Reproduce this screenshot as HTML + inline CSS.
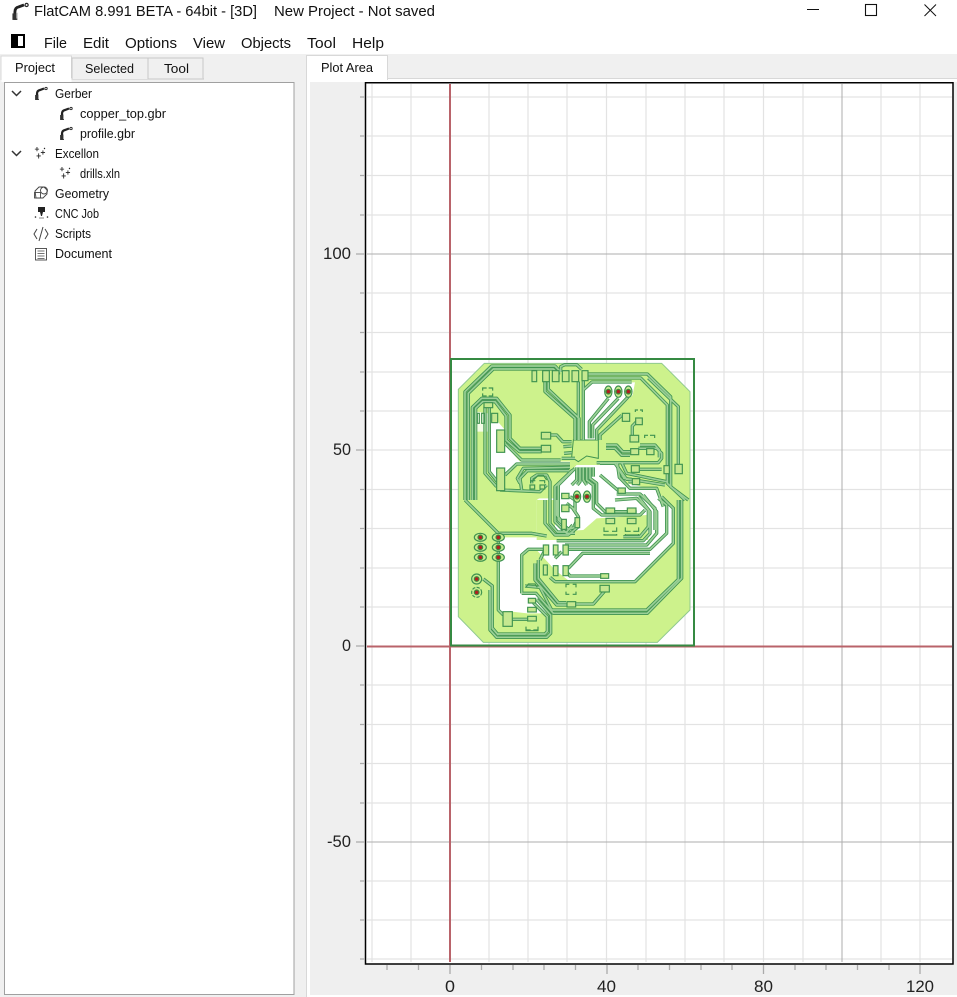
<!DOCTYPE html>
<html><head><meta charset="utf-8"><title>FlatCAM</title>
<style>
html,body{margin:0;padding:0;background:#fff;width:957px;height:997px;overflow:hidden}
svg{display:block}
text{font-family:"Liberation Sans",sans-serif;fill:#111}
.t{font-size:12.5px}
.m{font-size:15px}
.h{font-size:15px}
.a{font-size:16.500px;fill:#222}
</style></head><body>
<svg width="957" height="997" viewBox="0 0 957 997" xmlns="http://www.w3.org/2000/svg">
<defs>
<g id="gb" fill="none" stroke="#222">
<path d="M3 13V7Q3 3.500 6 3L10 1.500" stroke-width="2.200"/>
<path d="M3 13V8" stroke-width="3.800" stroke="#333"/>
<path d="M4.500 12V7.500" stroke-width="1" stroke="#aaa"/>
<circle cx="12" cy="1.500" r="1.200" stroke-width=".9"/>
</g>
<g id="ex" fill="#222">
<path d="M3 0h1v2h2v1h-2v2h-1v-2h-2v-1h2zM10 4h1v2h2v1h-2v2h-1v-2h-2v-1h2zM5 7.500h1v2.500h2v1h-2v2.500h-1v-2.500h-2v-1h2z" transform="scale(.85)"/>
<circle cx="10.500" cy="1.500" r=".7"/>
</g>
<g id="tr" fill="none" stroke-linejoin="round">
<path d="M75 450V125L155 48H345L362 66"/>
<path d="M85 450V130L160 57H340L358 75"/>
<path d="M97 450V172L125 145H170L210 195V265L240 295H305"/>
<path d="M107 450V175L128 155H165L198 198V270L238 305H305"/>
<path d="M135 170V370L170 410"/>
<path d="M148 170V365L172 395"/>
<path d="M195 280L245 330H362"/>
<path d="M195 375L230 342H390"/>
<path d="M445 72H622L692 140V410L745 450"/>
<path d="M445 84H602L682 165V400L735 450"/>
<path d="M715 345V170L625 84"/>
<path d="M315 95V125L405 205V270"/>
<path d="M325 95V118L417 205V270"/>
<path d="M415 95V270M430 90V270"/>
<path d="M432 118L456 96H575"/>
<path d="M505 145L448 215V265"/>
<path d="M535 145L458 225V265"/>
<path d="M565 140L470 240V270"/>
<path d="M545 196L480 255V270"/>
<path d="M590 215L577 228V262"/>
<path d="M330 255H350L368 275H395"/>
<path d="M370 290L395 288M372 310L395 308"/>
<path d="M365 325H405"/>
<path d="M362 66V50L375 44H410L425 58"/>
<path d="M498 285H530L548 305H570"/>
<path d="M498 295H525L545 316H570"/>
<path d="M595 295H650L665 310V325L655 338H470"/>
<path d="M600 285H645L658 300V322"/>
<path d="M545 338L560 370L680 395"/>
<path d="M530 345L552 385L675 405"/>
<path d="M600 358H665M600 395H565"/>
<path d="M240 400L232 385L250 355L390 352"/>
<path d="M245 420L240 385L262 362H388"/>
<path d="M275 400V385L290 375H320L330 395V450"/>
<path d="M180 420L300 425L320 405"/>
<g transform="translate(0,450)">
<path d="M75 0L175 100H275L320 108"/>
<path d="M175 112V330L190 345"/>
<path d="M130 237L157 258V385L175 405"/>
<path d="M150 270V390L170 412H320L332 400V345L290 298"/>
<path d="M158 385L172 402H315L322 394V350L280 308"/>
<path d="M215 358H262"/>
<path d="M245 280V165L265 148H310"/>
<path d="M245 280H288L340 340H622L725 235V0"/>
<path d="M255 258L300 262L335 330H620L715 238V0"/>
<path d="M285 190V240L350 315H380"/>
<path d="M295 180V235L355 308H378"/>
<path d="M375 148H630L680 100V15L655 -5"/>
<path d="M375 135H620L650 100V35L610 -15"/>
<path d="M350 122H610L630 100V35L595 -10"/>
<path d="M375 210L390 228H485"/>
<path d="M385 205L428 160H630"/>
<path d="M330 232L345 245H585L700 130V25L665 -10"/>
<path d="M395 312H460L495 272"/>
<path d="M315 0V70L345 105H385L415 80V60"/>
<path d="M330 0V70L352 96H380L398 75"/>
<path d="M350 0V45L370 70"/>
<path d="M322 135L300 180M345 175L365 155"/>
</g>
<g transform="translate(270,210)">
<path d="M135 145L85 195V300L115 328L135 322"/>
<path d="M128 150L75 200V305L110 340H135"/>
<path d="M140 142V180L125 195"/>
<path d="M150 142V185L142 195"/>
<path d="M160 142V180L170 195"/>
<path d="M170 142V180L190 195V265L215 285H330L345 270"/>
<path d="M180 142V175L200 190V250L225 275H320"/>
<path d="M190 142V170"/>
<path d="M262 130L268 172L300 205H380L400 260"/>
<path d="M255 240L320 235L355 270V320L330 350H280"/>
<path d="M210 130H255L290 178H305"/>
<path d="M260 222H330L375 265V330"/>
<path d="M210 165L265 212"/>
<path d="M120 230L135 240V270L110 250"/>
<path d="M125 260L145 290L132 320"/>
</g>
</g>
<g id="dp">
<ellipse rx="11" ry="17" fill="#c8ec90" stroke="#3f9350" stroke-width="3.500"/>
<circle r="7" fill="#b02020" stroke="#3f8a3f" stroke-width="3.500"/>
</g>
<g id="d2">
<ellipse rx="18" ry="12" fill="#c8ec90" stroke="#3f9350" stroke-width="3.500"/>
<circle r="7" fill="#b02020" stroke="#3f8a3f" stroke-width="3.500"/>
</g>
</defs>

<rect y="54" width="957" height="943" fill="#f0f0f0"/>
<rect x="1" y="78.500" width="203" height="1" fill="#c8c8c8"/>
<path d="M1 80V56H71.500V80" fill="#fff" stroke="#d8d8d8"/>
<rect x="1.500" y="78" width="70" height="4" fill="#fff"/>
<path d="M72 79V58H148V79M148 58H203V79" fill="#f0f0f0" stroke="#c8c8c8"/>
<rect x="4.500" y="82.500" width="289.500" height="912" fill="#fff" stroke="#a0a0a0"/>
<rect x="306" y="78" width="651" height="919" fill="#fff"/>
<rect x="306" y="78" width="651" height="1" fill="#d8d8d8"/>
<rect x="306" y="79" width="1" height="918" fill="#d8d8d8"/>
<path d="M306.500 80V55.500H387.500V80" fill="#fff" stroke="#d8d8d8"/>
<rect x="307" y="78" width="80" height="3" fill="#fff"/>
<rect x="310" y="82" width="647" height="913" fill="#efefef"/>

<rect x="365" y="82" width="588" height="882" fill="#fff"/>
<g stroke="#e3e3e3" stroke-width="1.200">
<path d="M372 84V962M411 84V962M489 84V962M528 84V962M567 84V962M606.500 84V962M646 84V962M685 84V962M724 84V962M763.500 84V962M803 84V962M881 84V962M920 84V962"/>
<path d="M367 97H952M367 136H952M367 175.500H952M367 215H952M367 293H952M367 332.500H952M367 372H952M367 411H952M367 489.500H952M367 528.500H952M367 568H952M367 607H952M367 685H952M367 724.500H952M367 763.500H952M367 803H952M367 881H952M367 920H952M367 959H952M367 450H952"/>
</g>
<g stroke="#adadad" stroke-width="1">
<path d="M842 84V962M367 254H952M367 842H952"/>
</g>

<g stroke="#b9636a" stroke-width="2">
<path d="M450 84V962M367 646.500H952"/>
</g>

<g transform="translate(440,350) scale(.33333)">
<path d="M55 118L133 40H665L750 125V780L652 877H130L55 800Z" fill="#cdf28c" stroke="#8fc98f" stroke-width="3"/>
<g fill="#fff">
<path d="M432 120L456 97H585L578 135L472 240V268H432Z"/>
<path d="M148 185L195 240V285L240 335H390V345H225L195 375L170 400L148 370Z"/>
<path d="M475 345H535L560 400L650 420L700 480V580L585 695H390L345 660L290 600V450L350 410L410 345Z"/>
<path d="M178 562H310V595L260 600L245 615V730H290L320 790H262L215 785H180Z"/>
<path d="M110 185L145 190V245H110Z" opacity=".8"/>
</g>
<path d="M470 505L620 495L625 570H345L345 545L430 540Z" fill="#cdf28c"/>
<path d="M350 445H285L255 440L240 385L262 365H340ZM290 450V570L345 570V450Z" fill="#cdf28c"/>
<path d="M400 270H475V325L440 318L415 335L395 322Z" fill="#cdf28c" stroke="#3f9350" stroke-width="3"/>
<use href="#tr" stroke="#3f9350" stroke-width="10"/>
<use href="#tr" stroke="#9cd097" stroke-width="5"/>
<g fill="#c5e890" stroke="#3f9350" stroke-width="3.500">
<rect x="276" y="62" width="14" height="33"/><rect x="308" y="62" width="20" height="33"/><rect x="337" y="62" width="20" height="33"/><rect x="367" y="62" width="20" height="33"/><rect x="396" y="62" width="20" height="33"/><rect x="426" y="62" width="18" height="30"/>
<rect x="132" y="158" width="26" height="15"/><rect x="155" y="190" width="18" height="28"/>
<rect x="170" y="240" width="24" height="67"/><rect x="170" y="354" width="24" height="68"/>
<rect x="304" y="247" width="28" height="20"/><rect x="304" y="286" width="28" height="20"/>
<rect x="547" y="190" width="22" height="24"/><rect x="570" y="256" width="26" height="20"/><rect x="572" y="296" width="24" height="18"/><rect x="620" y="296" width="22" height="18"/><rect x="587" y="204" width="20" height="20"/>
<rect x="672" y="347" width="16" height="24"/><rect x="705" y="343" width="22" height="28"/><rect x="574" y="347" width="24" height="20"/><rect x="577" y="386" width="22" height="18"/><rect x="534" y="414" width="22" height="16"/>
<rect x="365" y="430" width="22" height="16"/><rect x="270" y="405" width="14" height="12"/><rect x="300" y="405" width="14" height="12"/>
<rect x="365" y="465" width="22" height="20"/><rect x="405" y="503" width="14" height="30"/><rect x="365" y="508" width="14" height="30"/>
<rect x="498" y="474" width="26" height="16"/><rect x="562" y="474" width="26" height="16"/><rect x="498" y="505" width="26" height="16"/><rect x="562" y="505" width="26" height="16"/>
<rect x="310" y="585" width="16" height="30"/><rect x="340" y="585" width="14" height="30"/><rect x="369" y="585" width="16" height="30"/>
<rect x="310" y="645" width="12" height="30"/><rect x="340" y="647" width="14" height="30"/><rect x="369" y="647" width="16" height="30"/>
<rect x="482" y="671" width="24" height="14"/><rect x="480" y="706" width="28" height="20"/>
<rect x="381" y="755" width="26" height="16"/><rect x="265" y="745" width="22" height="14"/><rect x="263" y="772" width="26" height="14"/><rect x="263" y="799" width="26" height="14"/>
<rect x="189" y="785" width="28" height="44"/>
</g>
<g fill="none" stroke="#3f9350" stroke-width="3.500">
<path d="M128 122V114H140M146 114H158V122M128 130V138H140M146 138H158V130"/>
<path d="M112 190V220H118V190ZM125 190V220H133V190Z"/>
<path d="M586 186V180H594M600 180H607V186"/>
<path d="M614 264V256H624M630 256H644V264"/>
<path d="M275 395L295 376H310L320 390"/>
<path d="M272 400V392H286M298 392H314V400"/>
<path d="M492 532V544H506M516 544H530V532M492 552V555H530V552"/>
<path d="M556 532V544H572M580 544H596V532M556 552V555H596V552"/>
<path d="M378 712V703H388M398 703H408V712M378 725V733H388M398 733H408V725"/>
<path d="M258 712L265 702H285L292 712"/>
<path d="M258 840H272M280 840H294M258 830V842H294V830"/>
</g>
<use href="#dp" x="505" y="125"/><use href="#dp" x="535" y="125"/><use href="#dp" x="565" y="125"/>
<use href="#dp" x="411" y="440"/><use href="#dp" x="441" y="440"/>
<use href="#d2" x="121" y="562"/><use href="#d2" x="121" y="592"/><use href="#d2" x="121" y="622"/>
<use href="#d2" x="175" y="562"/><use href="#d2" x="175" y="592"/><use href="#d2" x="175" y="622"/>
<circle cx="110" cy="687" r="15" fill="#c8ec90" stroke="#3f9350" stroke-width="3.500"/><circle cx="110" cy="687" r="7" fill="#b02020" stroke="#3f8a3f" stroke-width="3.500"/>
<circle cx="110" cy="727" r="15" fill="#c8ec90" stroke="#3f9350" stroke-width="3.500" stroke-dasharray="10 4"/><circle cx="110" cy="727" r="7" fill="#b02020" stroke="#3f8a3f" stroke-width="3.500"/>
</g>
<rect x="451" y="359" width="243" height="286.500" fill="none" stroke="#358a42" stroke-width="2"/>

<path d="M365.500 82.700H953V964H365.500Z" fill="none" stroke="#000" stroke-width="1.500"/>
<g stroke="#aaa" stroke-width="1.300">
<path d="M360 97H365M360 136H365M360 175.500H365M360 215H365M356 254H365M360 293H365M360 332.500H365M360 372H365M360 411H365M356 450H365M360 489.500H365M360 528.500H365M360 568H365M360 607H365M356 646H365M360 685H365M360 724.500H365M360 763.500H365M360 803H365M356 842H365M360 881H365M360 920H365M360 959H365"/>
<path d="M387 965V970M418.500 965V970M450 965V974M481.500 965V970M513 965V970M544 965V970M575.500 965V970M607 965V974M638 965V970M669.500 965V970M701 965V970M732 965V970M763.500 965V974M795 965V970M826 965V970M857.500 965V970M889 965V970M920 965V974"/>
</g>
<g lengthAdjust="spacingAndGlyphs">
<text class="a" x="323" y="259" textLength="28" lengthAdjust="spacingAndGlyphs">100</text>
<text class="a" x="333" y="455" textLength="18" lengthAdjust="spacingAndGlyphs">50</text>
<text class="a" x="342" y="651" textLength="9" lengthAdjust="spacingAndGlyphs">0</text>
<text class="a" x="327" y="847" textLength="24" lengthAdjust="spacingAndGlyphs">-50</text>
<text class="a" x="445" y="992" textLength="10" lengthAdjust="spacingAndGlyphs">0</text>
<text class="a" x="597" y="992" textLength="19" lengthAdjust="spacingAndGlyphs">40</text>
<text class="a" x="754" y="992" textLength="19" lengthAdjust="spacingAndGlyphs">80</text>
<text class="a" x="906" y="992" textLength="28" lengthAdjust="spacingAndGlyphs">120</text>
</g>

<use href="#gb" transform="translate(11,3) scale(1.300)"/>
<text class="h" x="34" y="16" textLength="223" lengthAdjust="spacingAndGlyphs">FlatCAM 8.991 BETA - 64bit - [3D]</text>
<text class="h" x="274" y="16" textLength="161" lengthAdjust="spacingAndGlyphs">New Project - Not saved</text>
<path d="M807 9.500H819" stroke="#111" stroke-width="1"/>
<rect x="865.500" y="4.500" width="11" height="11" fill="none" stroke="#111" stroke-width="1.100"/>
<path d="M924.500 4.500L936 16M936 4.500L924.500 16" stroke="#111" stroke-width="1"/>

<rect x="11" y="34" width="14" height="14" fill="#000"/><rect x="18" y="36" width="5" height="10" fill="#fff"/>
<text class="m" x="44" y="48" textLength="23" lengthAdjust="spacingAndGlyphs">File</text>
<text class="m" x="83" y="48" textLength="26" lengthAdjust="spacingAndGlyphs">Edit</text>
<text class="m" x="125" y="48" textLength="52" lengthAdjust="spacingAndGlyphs">Options</text>
<text class="m" x="193" y="48" textLength="32" lengthAdjust="spacingAndGlyphs">View</text>
<text class="m" x="241" y="48" textLength="50" lengthAdjust="spacingAndGlyphs">Objects</text>
<text class="m" x="307" y="48" textLength="29" lengthAdjust="spacingAndGlyphs">Tool</text>
<text class="m" x="352" y="48" textLength="32" lengthAdjust="spacingAndGlyphs">Help</text>

<text class="t" x="15" y="72" textLength="40" lengthAdjust="spacingAndGlyphs">Project</text>
<text class="t" x="85" y="73" textLength="49" lengthAdjust="spacingAndGlyphs">Selected</text>
<text class="t" x="164" y="73" textLength="25" lengthAdjust="spacingAndGlyphs">Tool</text>
<text class="t" x="321" y="72" textLength="52" lengthAdjust="spacingAndGlyphs">Plot Area</text>

<path d="M12 91L16.500 95.500L21 91M12 151L16.500 155.500L21 151" fill="none" stroke="#333" stroke-width="1.500"/>
<use href="#gb" x="34" y="87"/><use href="#gb" x="59" y="107"/><use href="#gb" x="59" y="127"/>
<use href="#ex" x="34" y="147"/><use href="#ex" x="59" y="167"/>
<g fill="none" stroke="#444" stroke-width=".9">
<path d="M35 191L39 187H44L47 190V194L43 198H36Z"/><circle cx="44" cy="190.500" r="3.500"/><rect x="34.500" y="192.500" width="6" height="5.500"/>
<path d="M37 239L34 234L37 229M45 229L48 234L45 239M43 227L39 241" stroke-width="1"/>
<rect x="35.500" y="248.500" width="11" height="11.500"/>
<path d="M37.500 251H44.500M37.500 253.500H44.500M37.500 256H44.500M37.500 258.500H44.500" stroke-width=".8"/>
</g>
<path d="M38 207H45V212H43L42 216H41L40 212H38Z" fill="#222"/>
<circle cx="35.500" cy="217" r=".8" fill="#222"/><circle cx="47.500" cy="217" r=".8" fill="#222"/><rect x="39" y="217.500" width="5" height="1" fill="#888"/>
<text class="t" x="55" y="98" textLength="37" lengthAdjust="spacingAndGlyphs">Gerber</text>
<text class="t" x="80" y="118" textLength="86" lengthAdjust="spacingAndGlyphs">copper_top.gbr</text>
<text class="t" x="80" y="138" textLength="55" lengthAdjust="spacingAndGlyphs">profile.gbr</text>
<text class="t" x="55" y="158" textLength="44" lengthAdjust="spacingAndGlyphs">Excellon</text>
<text class="t" x="80" y="178" textLength="40" lengthAdjust="spacingAndGlyphs">drills.xln</text>
<text class="t" x="55" y="198" textLength="54" lengthAdjust="spacingAndGlyphs">Geometry</text>
<text class="t" x="55" y="218" textLength="44" lengthAdjust="spacingAndGlyphs">CNC Job</text>
<text class="t" x="55" y="238" textLength="36" lengthAdjust="spacingAndGlyphs">Scripts</text>
<text class="t" x="55" y="258" textLength="57" lengthAdjust="spacingAndGlyphs">Document</text>
</svg>
</body></html>
